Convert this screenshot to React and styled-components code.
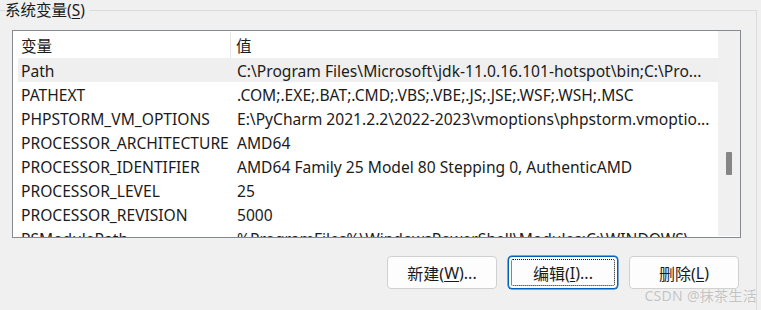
import React from "react";
import styled, { createGlobalStyle } from "styled-components";

const Global = createGlobalStyle`
  html, body { margin: 0; padding: 0; background: #f0f0f0; }
  body { width: 761px; height: 310px; overflow: hidden; }
  #root { width: 761px; height: 310px; }
`;

const FONT = `"Noto Sans", "Noto Sans CJK SC", sans-serif`;

const Page = styled.div`
  position: relative;
  width: 761px;
  height: 310px;
  background: #f0f0f0;
  font-family: ${FONT};
  color: #1b1b1b;
  overflow: hidden;
`;

const Frame = styled.div`
  margin-top: 10px;
  width: 756px;
  height: 320px;
  border-top: 1px solid #dcdcdc;
  border-right: 1px solid #dcdcdc;
  display: flex;
  flex-direction: column;
`;

const Legend = styled.div`
  align-self: flex-start;
  margin: -11px 0 0 5px;
  padding-right: 4px;
  background: #f0f0f0;
  font-size: 15.5px;
  line-height: 20px;
  height: 20px;
`;

const U = styled.span`
  text-decoration: underline;
  text-underline-offset: 2px;
`;

const ListBox = styled.div`
  margin: 10px 0 0 12px;
  width: 727px;
  height: 206px;
  border: 1px solid #858a91;
  background: #fff;
  display: flex;
  overflow: hidden;
`;

const ListBody = styled.div`
  flex: 1;
  padding-left: 5px;
  overflow: hidden;
`;

const Row = styled.div`
  box-sizing: border-box;
  display: grid;
  grid-template-columns: 213px 1fr;
  height: ${(p) => (p.$header ? 27 : 24)}px;
  padding-top: ${(p) => (p.$header ? 1 : 2)}px;
  align-items: center;
  background: ${(p) => (p.$selected ? "#efefef" : "transparent")};
  font-size: 15.6px;
  white-space: nowrap;
`;

const NameCell = styled.div`
  padding-left: 3px;
  height: 100%;
  display: flex;
  align-items: center;
  border-right: ${(p) => (p.$header ? "1px solid #e5e5e5" : "none")};
  overflow: hidden;
`;

const ValueCell = styled.div`
  padding-left: ${(p) => (p.$header ? 5 : 6)}px;
  overflow: hidden;
  text-overflow: clip;
`;

const ScrollBar = styled.div`
  width: 22px;
  height: 205px;
  background: #f0f0f0;
  display: flex;
  justify-content: center;
`;

const Thumb = styled.div`
  margin-top: 121px;
  width: 6px;
  height: 23px;
  background: #858585;
  border-radius: 1px;
`;

const ButtonRow = styled.div`
  display: flex;
  gap: 11px;
  margin: 18px 0 0 387px;
`;

const Button = styled.div`
  box-sizing: border-box;
  width: 110px;
  height: 33px;
  border-radius: 4px;
  background: #fdfdfd;
  border: 1px solid ${(p) => (p.$focused ? "#005fb8" : "#d0d0d0")};
  box-shadow: ${(p) => (p.$focused ? "0 0 0 0.5px #005fb8" : "none")};
  display: flex;
  align-items: center;
  justify-content: center;
  padding: 2px;
  font-size: 16px;
`;

const Focus = styled.div`
  flex: 1;
  align-self: stretch;
  display: flex;
  align-items: center;
  justify-content: center;
  border: ${(p) => (p.$on ? "1px dotted #111" : "1px solid transparent")};
  border-radius: 2px;
`;

const Watermark = styled.div`
  position: absolute;
  right: 4px;
  bottom: 5px;
  font-size: 14px;
  color: #c3c3c3;
  text-shadow: 0 0 1px #fff;
  letter-spacing: 0.3px;
`;

const rows = [
  ["Path", "C:\\Program Files\\Microsoft\\jdk-11.0.16.101-hotspot\\bin;C:\\Pro...", true],
  ["PATHEXT", ".COM;.EXE;.BAT;.CMD;.VBS;.VBE;.JS;.JSE;.WSF;.WSH;.MSC"],
  ["PHPSTORM_VM_OPTIONS", "E:\\PyCharm 2021.2.2\\2022-2023\\vmoptions\\phpstorm.vmoptio..."],
  ["PROCESSOR_ARCHITECTURE", "AMD64"],
  ["PROCESSOR_IDENTIFIER", "AMD64 Family 25 Model 80 Stepping 0, AuthenticAMD"],
  ["PROCESSOR_LEVEL", "25"],
  ["PROCESSOR_REVISION", "5000"],
  ["PSModulePath", "%ProgramFiles%\\WindowsPowerShell\\Modules;C:\\WINDOWS\\..."],
];

export default function App() {
  return (
    <Page>
      <Global />
      <Frame>
        <Legend>
          系统变量(<U>S</U>)
        </Legend>
        <ListBox>
          <ListBody>
            <Row $header>
              <NameCell $header>变量</NameCell>
              <ValueCell $header>值</ValueCell>
            </Row>
            {rows.map(([n, v, sel]) => (
              <Row key={n} $selected={sel}>
                <NameCell>{n}</NameCell>
                <ValueCell>{v}</ValueCell>
              </Row>
            ))}
          </ListBody>
          <ScrollBar>
            <Thumb />
          </ScrollBar>
        </ListBox>
        <ButtonRow>
          <Button>
            <Focus>
              新建(<U>W</U>)...
            </Focus>
          </Button>
          <Button $focused>
            <Focus $on>
              编辑(<U>I</U>)...
            </Focus>
          </Button>
          <Button>
            <Focus>
              删除(<U>L</U>)
            </Focus>
          </Button>
        </ButtonRow>
      </Frame>
      <Watermark>CSDN @抹茶生活</Watermark>
    </Page>
  );
}
